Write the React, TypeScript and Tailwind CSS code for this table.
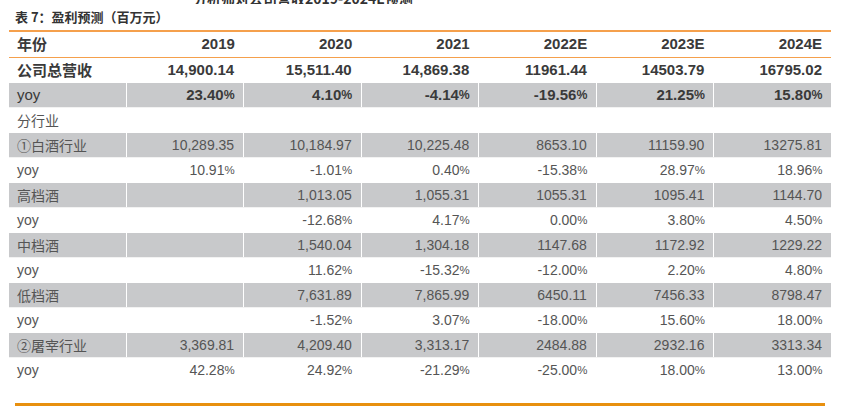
const cn = '"Noto Sans CJK SC", "Liberation Sans", sans-serif';
const num = '"Liberation Sans", "Noto Sans CJK SC", sans-serif';

type Row = { label: string; values: string[]; gray?: boolean; strong?: boolean };

const years = ["2019", "2020", "2021", "2022E", "2023E", "2024E"];

const rows: Row[] = [
  { label: "公司总营收", values: ["14,900.14", "15,511.40", "14,869.38", "11961.44", "14503.79", "16795.02"], strong: true },
  { label: "yoy", values: ["23.40%", "4.10%", "-4.14%", "-19.56%", "21.25%", "15.80%"], strong: true, gray: true },
  { label: "分行业", values: ["", "", "", "", "", ""] },
  { label: "①白酒行业", values: ["10,289.35", "10,184.97", "10,225.48", "8653.10", "11159.90", "13275.81"], gray: true },
  { label: "yoy", values: ["10.91%", "-1.01%", "0.40%", "-15.38%", "28.97%", "18.96%"] },
  { label: "高档酒", values: ["", "1,013.05", "1,055.31", "1055.31", "1095.41", "1144.70"], gray: true },
  { label: "yoy", values: ["", "-12.68%", "4.17%", "0.00%", "3.80%", "4.50%"] },
  { label: "中档酒", values: ["", "1,540.04", "1,304.18", "1147.68", "1172.92", "1229.22"], gray: true },
  { label: "yoy", values: ["", "11.62%", "-15.32%", "-12.00%", "2.20%", "4.80%"] },
  { label: "低档酒", values: ["", "7,631.89", "7,865.99", "6450.11", "7456.33", "8798.47"], gray: true },
  { label: "yoy", values: ["", "-1.52%", "3.07%", "-18.00%", "15.60%", "18.00%"] },
  { label: "②屠宰行业", values: ["3,369.81", "4,209.40", "3,313.17", "2484.88", "2932.16", "3313.34"], gray: true },
  { label: "yoy", values: ["42.28%", "24.92%", "-21.29%", "-25.00%", "18.00%", "13.00%"] },
];

function Pct({ text }: { text: string }) {
  if (!text.endsWith("%")) return <>{text}</>;
  return (
    <>
      {text.slice(0, -1)}
      <span className="inline-block text-[0.82em] tracking-[-0.5px]">%</span>
    </>
  );
}

function TableRow({ row }: { row: Row }) {
  const cell = row.gray ? "bg-[#c8c9cb]" : "bg-white";
  const text = row.strong ? "text-[15px] font-bold text-[#3a3a3a]" : "text-[14px] text-[#555555]";
  const isYoy = row.label === "yoy";
  return (
    <div className={`grid grid-cols-7 gap-x-px h-[25px] ${row.gray ? "border-b border-[#f2f2f2]" : ""}`}>
      <div
        className={`${cell} ${text} ${isYoy && row.strong ? "font-normal" : ""} flex items-center pl-2`}
        style={{ fontFamily: isYoy ? num : cn }}
      >
        {row.label}
      </div>
      {row.values.map((v, i) => (
        <div key={i} className={`${cell} ${text} flex items-center justify-end pr-[9px]`} style={{ fontFamily: num }}>
          <Pct text={v} />
        </div>
      ))}
    </div>
  );
}

export default function App() {
  return (
    <div className="w-[844px] h-[408px] bg-white overflow-hidden">
      <div className="h-[4px] overflow-hidden relative">
        <div
          className="absolute left-[193px] top-[-12px] text-[14px] font-bold text-[#333] whitespace-nowrap"
          style={{ fontFamily: cn }}
        >
          分析师对公司营收2019-2024E预测
        </div>
      </div>
      <div className="h-[26px] flex items-center pl-[15px] text-[13px] font-bold text-[#333]" style={{ fontFamily: cn }}>
        表 7：盈利预测（百万元）
      </div>
      <div className="ml-[9px] w-[822px]">
        <div className="h-[1.5px] bg-[#f5a04c]" />
        <div className="grid grid-cols-7 h-[25px] text-[15px] font-bold text-[#3a3a3a]">
          <div className="flex items-center pl-2" style={{ fontFamily: cn }}>
            年份
          </div>
          {years.map((y) => (
            <div key={y} className="flex items-center justify-end pr-[9px]" style={{ fontFamily: num }}>
              {y}
            </div>
          ))}
        </div>
        <div className="h-[1.5px] bg-[#f5a04c]" />
        {rows.map((r, i) => (
          <TableRow key={i} row={r} />
        ))}
      </div>
      <div className="mt-[20px] ml-[15px] w-[810px] h-[3px] bg-[#e8900f]" />
    </div>
  );
}
